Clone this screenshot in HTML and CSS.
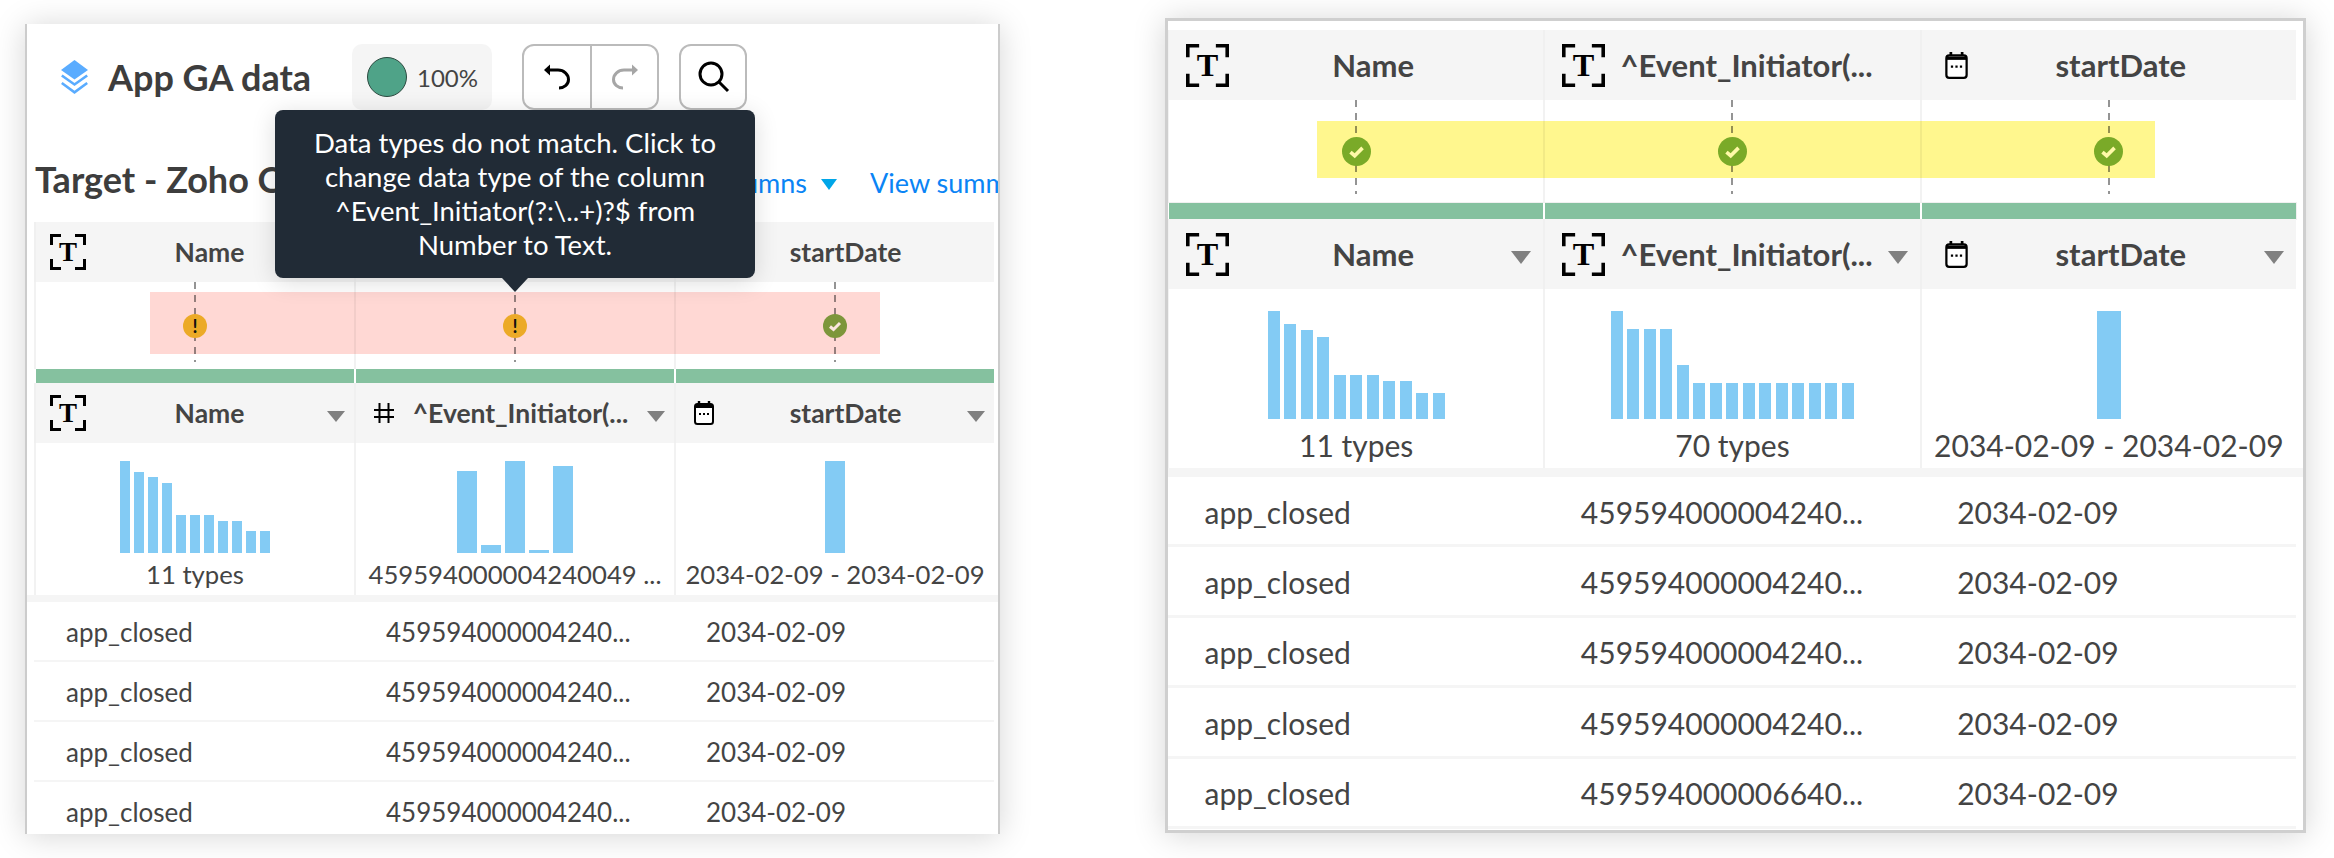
FILE: index.html
```html
<!DOCTYPE html>
<html lang="en">
<head>
<meta charset="utf-8">
<title>App GA data</title>
<link rel="stylesheet" href="styles.css">
</head>
<body>
<svg class="sprite" aria-hidden="true">
  <symbol id="i-date" viewBox="0 0 20 24">
    <path d="M5 0V4M15 0V4" stroke="#000" stroke-width="2.4"/>
    <rect x="1" y="3" width="18" height="20" rx="2.5" fill="#fff" stroke="#000" stroke-width="2"/>
    <path d="M1 5.5H19" stroke="#000" stroke-width="3"/>
    <path d="M5 13H7M9 13H11M13 13H15" stroke="#000" stroke-width="2"/>
  </symbol>
  <symbol id="i-num" viewBox="0 0 20 20">
    <path d="M5.5 0V20M14.5 0V20M0 7H20M0 14H20" stroke="#000" stroke-width="2" fill="none"/>
  </symbol>
</svg>

<main class="canvas">
  <section class="panel panel-left">
    <header class="toolbar">
      <svg class="logo" viewBox="0 0 27 34" aria-hidden="true">
        <path d="M13.5 0L27 10L13.5 19.5L0 10Z" fill="#5aacff"/>
        <path d="M.8 15.5L13.5 24.5L26.2 15.5M.8 23L13.5 32.3L26.2 23" fill="none" stroke="#5aacff" stroke-width="2.6"/>
      </svg>
      <h1 class="app-title">App GA data</h1>
      <div class="score">
        <span class="score-dot"></span>
        <span class="score-num">100%</span>
      </div>
      <div class="btn-group">
        <button class="tool-btn" aria-label="Undo">
          <svg viewBox="0 0 36 36" width="36" height="36" aria-hidden="true">
            <path d="M5 11L11 5.5V16.5Z" fill="#000"/>
            <path d="M10 11H19A10.5 9.5 0 0 1 29.5 20.5C29.5 25.5 25 29 20 29" fill="none" stroke="#000" stroke-width="3"/>
          </svg>
        </button>
        <button class="tool-btn" aria-label="Redo">
          <svg viewBox="0 0 36 36" width="36" height="36" aria-hidden="true">
            <path d="M31 11L25 5.5V16.5Z" fill="#a6a6a6"/>
            <path d="M26 11H17A10.5 9.5 0 0 0 6.5 20.5C6.5 25.5 11 29 16 29" fill="none" stroke="#a6a6a6" stroke-width="3"/>
          </svg>
        </button>
      </div>
      <button class="tool-btn tool-solo" aria-label="Search">
        <svg viewBox="0 0 36 36" width="36" height="36" aria-hidden="true">
          <circle cx="16" cy="15" r="11" fill="none" stroke="#000" stroke-width="3"/>
          <path d="M24 23L33 32" stroke="#000" stroke-width="3"/>
        </svg>
      </button>
    </header>

    <div class="subhead">
      <h2 class="target">Target - Zoho Creator</h2>
      <a class="link">Columns</a>
      <span class="link-caret"></span>
      <a class="link link-summary">View summary</a>
    </div>

    <div class="tooltip">
      Data types do not match. Click to change data type of the column ^Event_Initiator(?:\..+)?$ from Number to Text.
    </div>

    <div class="cols head">
      <div class="cell"><svg class="ic ic-t" viewBox="0 0 36 36" aria-hidden="true"><path class="ic-t-frame" d="M1.5 11V1.5H11M25 1.5H34.5V11M1.5 25V34.5H11M25 34.5H34.5V25"/><text class="ic-t-letter" x="18" y="27">T</text></svg><span class="col-name nudge">Name</span><i class="caret off"></i></div>
      <div class="cell"><svg class="ic ic-num"><use href="#i-num"/></svg><span class="col-name"></span><i class="caret off"></i></div>
      <div class="cell"><svg class="ic ic-date"><use href="#i-date"/></svg><span class="col-name nudge-more">startDate</span><i class="caret off"></i></div>
    </div>
    <div class="cols match">
      <div class="band band-bad"></div>
      <div class="cell"><div class="dash"><span class="mark mark-warn">!</span></div></div>
      <div class="cell"><div class="dash"><span class="mark mark-warn">!</span></div></div>
      <div class="cell"><div class="dash"><span class="mark mark-ok-dim"><svg viewBox="0 0 24 24" class="tick"><path d="M7 12.5L10.5 15.5L17 9" /></svg></span></div></div>
    </div>
    <div class="cols quality">
      <div class="cell"></div><div class="cell"></div><div class="cell"></div>
    </div>
    <div class="cols head">
      <div class="cell"><svg class="ic ic-t" viewBox="0 0 36 36" aria-hidden="true"><path class="ic-t-frame" d="M1.5 11V1.5H11M25 1.5H34.5V11M1.5 25V34.5H11M25 34.5H34.5V25"/><text class="ic-t-letter" x="18" y="27">T</text></svg><span class="col-name nudge">Name</span><i class="caret"></i></div>
      <div class="cell"><svg class="ic ic-num"><use href="#i-num"/></svg><span class="col-name">^Event_Initiator(...</span><i class="caret"></i></div>
      <div class="cell"><svg class="ic ic-date"><use href="#i-date"/></svg><span class="col-name nudge-more">startDate</span><i class="caret"></i></div>
    </div>
    <div class="cols hist">
      <div class="cell">
        <div class="bars">
          <i class="bar" style="height:92px"></i><i class="bar" style="height:81px"></i><i class="bar" style="height:76px"></i><i class="bar" style="height:70px"></i><i class="bar" style="height:38px"></i><i class="bar" style="height:38px"></i><i class="bar" style="height:38px"></i><i class="bar" style="height:32px"></i><i class="bar" style="height:32px"></i><i class="bar" style="height:22px"></i><i class="bar" style="height:22px"></i>
        </div>
        <div class="hist-label">11 types</div>
      </div>
      <div class="cell">
        <div class="bars">
          <i class="bar bar-mid" style="height:82px"></i><i class="bar bar-mid" style="height:8px"></i><i class="bar bar-mid" style="height:92px"></i><i class="bar bar-mid" style="height:3px"></i><i class="bar bar-mid" style="height:87px"></i>
        </div>
        <div class="hist-label">459594000004240049 ...</div>
      </div>
      <div class="cell">
        <div class="bars"><i class="bar bar-mid" style="height:92px"></i></div>
        <div class="hist-label">2034-02-09 - 2034-02-09</div>
      </div>
    </div>
    <div class="divider"></div>
    <div class="cols row"><div class="cell">app_closed</div><div class="cell">459594000004240...</div><div class="cell">2034-02-09</div></div>
    <div class="cols row"><div class="cell">app_closed</div><div class="cell">459594000004240...</div><div class="cell">2034-02-09</div></div>
    <div class="cols row"><div class="cell">app_closed</div><div class="cell">459594000004240...</div><div class="cell">2034-02-09</div></div>
    <div class="cols row"><div class="cell">app_closed</div><div class="cell">459594000004240...</div><div class="cell">2034-02-09</div></div>
  </section>

  <section class="panel panel-right">
    <div class="cols head">
      <div class="cell"><svg class="ic ic-t" viewBox="0 0 36 36" aria-hidden="true"><path class="ic-t-frame" d="M1.5 11V1.5H11M25 1.5H34.5V11M1.5 25V34.5H11M25 34.5H34.5V25"/><text class="ic-t-letter" x="18" y="27">T</text></svg><span class="col-name nudge">Name</span><i class="caret off"></i></div>
      <div class="cell"><svg class="ic ic-t" viewBox="0 0 36 36" aria-hidden="true"><path class="ic-t-frame" d="M1.5 11V1.5H11M25 1.5H34.5V11M1.5 25V34.5H11M25 34.5H34.5V25"/><text class="ic-t-letter" x="18" y="27">T</text></svg><span class="col-name">^Event_Initiator(...</span><i class="caret off"></i></div>
      <div class="cell"><svg class="ic ic-date"><use href="#i-date"/></svg><span class="col-name nudge-more">startDate</span><i class="caret off"></i></div>
    </div>
    <div class="cols match">
      <div class="band band-good"></div>
      <div class="cell"><div class="dash"><span class="mark mark-ok"><svg viewBox="0 0 24 24" class="tick"><path d="M7 12.5L10.5 15.5L17 9" /></svg></span></div></div>
      <div class="cell"><div class="dash"><span class="mark mark-ok"><svg viewBox="0 0 24 24" class="tick"><path d="M7 12.5L10.5 15.5L17 9" /></svg></span></div></div>
      <div class="cell"><div class="dash"><span class="mark mark-ok"><svg viewBox="0 0 24 24" class="tick"><path d="M7 12.5L10.5 15.5L17 9" /></svg></span></div></div>
    </div>
    <div class="cols quality">
      <div class="cell"></div><div class="cell"></div><div class="cell"></div>
    </div>
    <div class="cols head">
      <div class="cell"><svg class="ic ic-t" viewBox="0 0 36 36" aria-hidden="true"><path class="ic-t-frame" d="M1.5 11V1.5H11M25 1.5H34.5V11M1.5 25V34.5H11M25 34.5H34.5V25"/><text class="ic-t-letter" x="18" y="27">T</text></svg><span class="col-name nudge">Name</span><i class="caret"></i></div>
      <div class="cell"><svg class="ic ic-t" viewBox="0 0 36 36" aria-hidden="true"><path class="ic-t-frame" d="M1.5 11V1.5H11M25 1.5H34.5V11M1.5 25V34.5H11M25 34.5H34.5V25"/><text class="ic-t-letter" x="18" y="27">T</text></svg><span class="col-name">^Event_Initiator(...</span><i class="caret"></i></div>
      <div class="cell"><svg class="ic ic-date"><use href="#i-date"/></svg><span class="col-name nudge-more">startDate</span><i class="caret"></i></div>
    </div>
    <div class="cols hist">
      <div class="cell">
        <div class="bars">
          <i class="bar" style="height:108px"></i><i class="bar" style="height:95px"></i><i class="bar" style="height:89px"></i><i class="bar" style="height:82px"></i><i class="bar" style="height:44px"></i><i class="bar" style="height:44px"></i><i class="bar" style="height:44px"></i><i class="bar" style="height:38px"></i><i class="bar" style="height:38px"></i><i class="bar" style="height:26px"></i><i class="bar" style="height:26px"></i>
        </div>
        <div class="hist-label">11 types</div>
      </div>
      <div class="cell">
        <div class="bars">
          <i class="bar" style="height:108px"></i><i class="bar" style="height:90px"></i><i class="bar" style="height:90px"></i><i class="bar" style="height:90px"></i><i class="bar" style="height:54px"></i><i class="bar" style="height:36px"></i><i class="bar" style="height:36px"></i><i class="bar" style="height:36px"></i><i class="bar" style="height:36px"></i><i class="bar" style="height:36px"></i><i class="bar" style="height:36px"></i><i class="bar" style="height:36px"></i><i class="bar" style="height:36px"></i><i class="bar" style="height:36px"></i><i class="bar" style="height:36px"></i>
        </div>
        <div class="hist-label">70 types</div>
      </div>
      <div class="cell">
        <div class="bars"><i class="bar bar-mid" style="height:108px"></i></div>
        <div class="hist-label">2034-02-09 - 2034-02-09</div>
      </div>
    </div>
    <div class="divider"></div>
    <div class="cols row"><div class="cell">app_closed</div><div class="cell">459594000004240...</div><div class="cell">2034-02-09</div></div>
    <div class="cols row"><div class="cell">app_closed</div><div class="cell">459594000004240...</div><div class="cell">2034-02-09</div></div>
    <div class="cols row"><div class="cell">app_closed</div><div class="cell">459594000004240...</div><div class="cell">2034-02-09</div></div>
    <div class="cols row"><div class="cell">app_closed</div><div class="cell">459594000004240...</div><div class="cell">2034-02-09</div></div>
    <div class="cols row"><div class="cell">app_closed</div><div class="cell">459594000006640...</div><div class="cell">2034-02-09</div></div>
  </section>
</main>
</body>
</html>
```

FILE: styles.css
```css
* { box-sizing: border-box; }
html, body { margin: 0; padding: 0; background: #fff; }
body { font-family: "Lato", "Noto Sans", sans-serif; color: #444; overflow: hidden; }

.sprite { position: absolute; width: 0; height: 0; }

.canvas {
  display: flex;
  align-items: flex-start;
  gap: 165px;
  padding: 18px 0 0 25px;
  width: 2334px;
  height: 858px;
}

.panel {
  position: relative;
  background: #fff;
  overflow: hidden;
  flex: none;
  box-shadow: 0 2px 30px rgba(0, 0, 0, .17);
}
.panel-left {
  --font: 26px;
  --head-font: 26.5px;
  --label-font: 25.7px;
  --head-h: 60px;
  width: 975px;
  height: 810px;
  margin-top: 6px;
  border-left: 2px solid #ccc;
  border-right: 2px solid #ccc;
}
.panel-right {
  --font: 30px;
  --head-font: 31px;
  --label-font: 30px;
  --head-h: 70px;
  width: 1141px;
  height: 815px;
  border: 3px solid #cfcfcf;
  padding-top: 9px;
}

/* toolbar */
.toolbar { display: flex; align-items: center; height: 86px; padding: 20px 0 0 34px; }
.logo { width: 27px; height: 34px; flex: none; }
.app-title { margin: 0 0 0 20px; font-size: 36px; font-weight: 700; color: #3d3d3d; width: 244px; white-space: nowrap; }
.score {
  display: flex; align-items: center; gap: 10px;
  width: 140px; height: 66px; padding-left: 15px;
  background: #f5f5f5; border-radius: 10px;
}
.score-dot { width: 40px; height: 40px; border-radius: 50%; background: #4fa388; border: 1.5px solid #2c4a40; }
.score-num { font-size: 24px; color: #444; }
.btn-group { display: flex; margin-left: 30px; height: 66px; border: 2px solid #bbb; border-radius: 12px; }
.tool-btn {
  display: flex; align-items: center; justify-content: center;
  width: 66px; padding: 0; background: none; border: 0;
}
.tool-btn + .tool-btn { border-left: 2px solid #bbb; width: 67px; }
.tool-solo { margin-left: 20px; width: 68px; height: 66px; border: 2px solid #bbb; border-radius: 12px; }

/* sub heading */
.subhead { display: flex; align-items: baseline; height: 112px; padding: 47px 0 0 8px; white-space: nowrap; }
.target { margin: 0; flex: 0 0 620px; font-size: 36px; font-weight: 700; color: #3d3d3d; }
.link { color: #0a84f5; font-size: 27px; width: 152px; text-align: right; flex: none; }
.link-caret {
  flex: none; margin-left: 14px; width: 0; height: 0; align-self: flex-start; margin-top: 22px;
  border-left: 8.5px solid transparent; border-right: 8.5px solid transparent; border-top: 11px solid #00a6e8;
}
.link-summary { margin-left: 33px; width: auto; text-align: left; }

.tooltip {
  position: absolute; left: 248px; top: 86px; z-index: 5;
  width: 480px; height: 168px;
  padding: 16px 30px 0;
  background: #212b36; color: #fff; border-radius: 8px;
  font-size: 27.5px; line-height: 34px; text-align: center;
  box-shadow: 0 4px 24px rgba(0, 0, 0, .14);
}
.tooltip::after {
  content: ""; position: absolute; left: 227px; top: 168px;
  border-left: 13px solid transparent; border-right: 13px solid transparent; border-top: 14px solid #212b36;
}

/* table */
.cols { display: grid; grid-template-columns: repeat(3, 1fr); position: relative; }
.panel-left .cols { margin: 0 4px 0 7px; }
.panel-right .cols { margin: 0 7px 0 -1px; }
.cell { border-left: 2px solid rgba(0, 0, 0, .05); min-width: 0; }

.head { height: var(--head-h); background: #f5f5f5; }
.head .cell { display: flex; align-items: center; border-left-color: #f0f0f0; }
.col-name {
  flex: 1; min-width: 0; text-align: center; white-space: nowrap;
  font-size: var(--head-font); font-weight: 700; color: #444;
}
.nudge { padding-left: 6px; }
.nudge-more { padding-left: 10px; }
.ic { flex: none; }
.ic-t-frame { fill: none; stroke: #000; stroke-width: 3; }
.ic-t-letter { font-family: "Liberation Serif", serif; font-weight: 700; font-size: 27px; text-anchor: middle; fill: #000; }
.panel-left .ic-t { width: 36px; height: 36px; margin-left: 14px; }
.panel-left .ic-num { width: 20px; height: 20px; margin-left: 18px; }
.panel-left .ic-date { width: 20px; height: 24px; margin-left: 18px; }
.panel-right .ic-t { width: 43px; height: 43px; margin-left: 17px; }
.panel-right .ic-date { width: 23px; height: 27px; margin-left: 23px; }
.caret { flex: none; width: 0; height: 0; margin-top: 7px; }
.panel-left .caret { margin-right: 9px; border-left: 9px solid transparent; border-right: 9px solid transparent; border-top: 11px solid #808080; }
.panel-right .caret { margin-right: 12px; border-left: 10px solid transparent; border-right: 10px solid transparent; border-top: 13px solid #808080; }
.caret.off { visibility: hidden; }

.match .cell { position: relative; display: flex; justify-content: center; }
.panel-left .match { height: 87px; }
.panel-right .match { height: 103px; }
.dash {
  width: 2px; display: flex; align-items: center; justify-content: center;
  background: repeating-linear-gradient(rgba(0, 0, 0, .42) 0 7px, transparent 7px 13px);
}
.panel-left .dash { height: 80px; }
.panel-right .dash { height: 94px; }
.mark {
  flex: none; display: flex; align-items: center; justify-content: center;
  border-radius: 50%; color: #111; font-weight: 700;
}
.panel-left .mark { width: 24px; height: 24px; margin-top: 7px; font-size: 18px; line-height: 1; }
.panel-right .mark { width: 29px; height: 29px; margin-top: 9px; }
.mark-warn { background: #ecaa27; }
.mark-ok-dim { background: #7d963b; --tick: #fbe6e0; }
.mark-ok { background: #7aaa28; --tick: #fff9a8; }
.tick { width: 100%; height: 100%; }
.tick path { fill: none; stroke: var(--tick); stroke-width: 3; }

.band { position: absolute; }
.panel-left .band { left: 116px; top: 10px; width: 730px; height: 62px; }
.panel-right .band { left: 150px; top: 21px; width: 838px; height: 57px; }
.band-bad { background: rgba(255, 178, 170, .5); }
.band-good { background: rgba(255, 240, 30, .5); }

.quality { background: #85c19f; }
.panel-left .quality { height: 14px; }
.panel-right .quality { height: 16px; box-shadow: 0 0 0 1px #f0f0f0; }
.quality .cell { height: 100%; border-left-color: #fff; }

.hist .cell { text-align: center; min-width: 0; }
.panel-left .hist .cell { height: 152px; padding-top: 18px; }
.panel-right .hist .cell { height: 179px; padding-top: 22px; }
.bars { display: flex; align-items: flex-end; justify-content: center; }
.panel-left .bars { height: 92px; gap: 4px; }
.panel-right .bars { height: 108px; gap: 4.5px; }
.bar { display: block; background: #83cbf4; }
.panel-left .bar { width: 10px; }
.panel-right .bar { width: 12px; }
.panel-left .bar-mid { width: 20px; }
.panel-right .bar-mid { width: 24px; }
.hist-label { white-space: nowrap; font-size: var(--label-font); color: #444; }
.panel-left .hist-label { margin-top: 6px; line-height: 30px; }
.panel-right .hist-label { margin-top: 8px; line-height: 36px; }

.divider { background: #f5f5f5; }
.panel-left .divider { height: 7px; }
.panel-right .divider { height: 9px; }

.row { align-items: center; font-size: var(--font); color: #444; white-space: nowrap; }
.panel-left .row { height: 60px; padding-top: 2px; border-bottom: 2px solid #f5f5f5; }
.panel-left .row .cell { padding-left: 30px; }
.panel-right .row { height: 70.4px; padding-top: 2px; border-bottom: 3px solid #f5f5f5; }
.panel-right .row .cell { padding-left: 35.5px; }
.row .cell { border-left-color: transparent; }
```
